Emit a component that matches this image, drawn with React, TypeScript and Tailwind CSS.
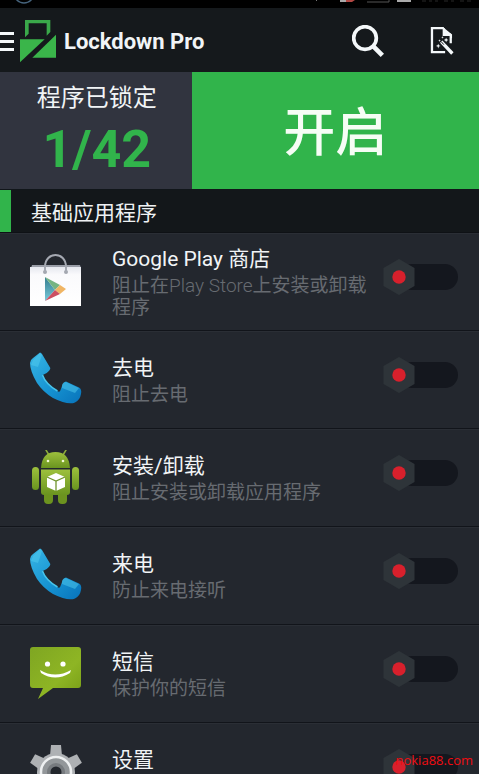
import { ReactNode, useState } from 'react';

function Logo() {
  return (
    <svg viewBox="60 54 108 132" className="h-11 w-9 shrink-0" aria-hidden="true">
      <path d="M75 109V57h76v36l-11 11V67H86v31z" fill="#3aa84a" />
      <path d="M60 115h74L60 184z" fill="#3ab54a" />
      <path d="M168 101v69H97z" fill="#3ab54a" />
    </svg>
  );
}

function SearchIcon() {
  return (
    <svg viewBox="0 0 96 96" className="h-8 w-8" fill="none" stroke="#f4f8fa" aria-hidden="true">
      <circle cx="39" cy="39" r="34" strokeWidth="11" />
      <path d="M64 64l27 27" strokeWidth="14" />
    </svg>
  );
}

function WizardIcon() {
  return (
    <svg viewBox="570 76 76 90" className="h-[30px] w-[25px]" aria-hidden="true">
      <path d="M612 82h-36v73h40M633 128v-27M612 82v20h22" fill="none" stroke="#f4f8fa" strokeWidth="7" />
      <path d="M610 79l27 22v12h-5v-9h-22z" fill="#f4f8fa" />
      <path d="M604 123l34 36" stroke="#f4f8fa" strokeWidth="10" />
      <path d="M604 123l8 9" stroke="#15191c" strokeWidth="3" />
      <path
        d="M595 129l2 5 5 2-5 2-2 6-2-6-5-2 5-2zM619 111l2 5 5 2-5 2-2 5-2-5-5-2 5-2zM608 106l1 3 3 1-3 1-1 3-1-3-3-1 3-1zM599 116l1 3 3 1-3 1-1 3-1-3-3-1 3-1z"
        fill="#f4f8fa"
      />
    </svg>
  );
}

function StoreIcon() {
  return (
    <svg viewBox="0 0 56 56" className="h-14 w-14" aria-hidden="true">
      <defs>
        <linearGradient id="bag" x1="0" y1="0" x2="0" y2="1">
          <stop offset="0" stopColor="#e6e8ef" />
          <stop offset=".2" stopColor="#fafafc" />
          <stop offset="1" stopColor="#ffffff" />
        </linearGradient>
        <linearGradient id="play" x1="0" y1="0" x2="0" y2="1">
          <stop offset="0" stopColor="#347d8e" />
          <stop offset="1" stopColor="#78c9da" />
        </linearGradient>
      </defs>
      <path d="M4 11h48l1 3H3z" fill="#9a9ea8" />
      <path d="M2 13h51v39H2z" fill="url(#bag)" />
      <circle cx="17" cy="18" r="2" fill="#a3a7af" />
      <circle cx="38" cy="18" r="2" fill="#a3a7af" />
      <path d="M17 18v-5C17-3 38-3 38 13v5" fill="none" stroke="#a5a9b2" strokeWidth="2" />
      <path d="M17 23v24l10-11z" fill="url(#play)" />
      <path d="M17 23l15 8-5 5z" fill="#75b482" />
      <path d="M32 31l6 4-6 5-5-4z" fill="#f0b564" />
      <path d="M17 47l10-11 5 4z" fill="#cc4f62" />
    </svg>
  );
}

function PhoneIcon() {
  return (
    <svg viewBox="0 0 56 56" className="h-14 w-14" aria-hidden="true">
      <defs>
        <linearGradient id="phone" x1="0" y1="0" x2="1" y2="1">
          <stop offset="0" stopColor="#38b5e4" />
          <stop offset=".55" stopColor="#1693d2" />
          <stop offset="1" stopColor="#0873ba" />
        </linearGradient>
      </defs>
      <path
        d="M12 .5Q13 .5 14 2L22.300 16Q22.500 18 18.700 21L14.700 23Q17 32 29 39Q32 41 32.500 38L34 34Q35 30 38 29.500L51 35.500Q54 37 53 42Q52 48 47 50.500Q40 53.500 25 46Q15 40 9 31Q2 19 2 11Q2 8 5 6Z"
        fill="url(#phone)"
      />
      <path d="M5 8l7-7 2 2-4 12-7-2zM34 33q1-3 4-3l13 6-4 5-13-5z" fill="#51cbed" opacity=".5" />
      <path d="M14.500 23q3 9 15 16" fill="none" stroke="#47c5ec" strokeWidth="1.500" />
    </svg>
  );
}

function AndroidIcon() {
  return (
    <svg viewBox="0 0 56 56" className="h-14 w-14" aria-hidden="true">
      <defs>
        <linearGradient id="robot" x1="0" y1="0" x2="0" y2="1">
          <stop offset="0" stopColor="#9dc03d" />
          <stop offset="1" stopColor="#6a941f" />
        </linearGradient>
      </defs>
      <path d="M18 0l3 5M38 0l-3 5" stroke="#8fae3a" strokeWidth="1.500" strokeLinecap="round" />
      <path d="M13 18Q14 2 27.500 2T42 18z" fill="url(#robot)" />
      <circle cx="20" cy="11" r="1.300" fill="#f3fad5" />
      <circle cx="35" cy="11" r="1.300" fill="#f3fad5" />
      <rect x="4" y="17" width="7" height="23" rx="3.500" fill="url(#robot)" />
      <rect x="44" y="17" width="7" height="23" rx="3.500" fill="url(#robot)" />
      <rect x="16" y="39" width="9" height="15" rx="4" fill="#6c931f" />
      <rect x="30" y="39" width="9" height="15" rx="4" fill="#6c931f" />
      <path d="M13 19.500h29V42q0 3-3 3H16q-3 0-3-3z" fill="url(#robot)" />
      <path d="M28 23l9 4v10l-9 4-9-4V27z" fill="#fff" />
      <path d="M19 27l9 4 9-4M28 31v10" fill="none" stroke="#71952d" strokeWidth="1.300" />
    </svg>
  );
}

function MessageIcon() {
  return (
    <svg viewBox="0 0 56 56" className="h-14 w-14" aria-hidden="true">
      <defs>
        <linearGradient id="sms" x1="0" y1="0" x2="1" y2="1">
          <stop offset="0" stopColor="#7fa622" />
          <stop offset=".6" stopColor="#8eb524" />
          <stop offset="1" stopColor="#769c16" />
        </linearGradient>
      </defs>
      <path d="M5 1h45q3 0 3 3v35q0 3-3 3H25L10 53l5-11H5q-3 0-3-3V4q0-3 3-3z" fill="url(#sms)" />
      <circle cx="19.500" cy="18" r="2.600" fill="#fff" />
      <circle cx="35" cy="18" r="2.600" fill="#fff" />
      <path d="M12 24Q27 33 43 24L42 27Q27 36 13 27Z" fill="#fff" />
    </svg>
  );
}

function GearIcon() {
  return (
    <svg viewBox="0 0 56 56" className="h-14 w-14" aria-hidden="true">
      <g fill="#aeb1b4">
        {[0, 60, 120, 180, 240, 300].map((angle) => (
          <path key={angle} d="M23 1h10l1 11H22z" transform={`rotate(${angle} 28 28)`} />
        ))}
        <circle cx="28" cy="28" r="19" />
      </g>
      <circle cx="28" cy="28" r="15" fill="#93979a" stroke="#eef0f1" strokeWidth="2.500" />
      <circle cx="28" cy="28" r="9" fill="#777b7f" />
      <circle cx="28" cy="28" r="5.500" fill="#23272d" />
    </svg>
  );
}

function Toggle({ label }: { label: string }) {
  const [on, setOn] = useState(false);
  return (
    <label className="mt-[26px] grid h-9 w-[75px] shrink-0 cursor-pointer items-center self-start">
      <input
        type="checkbox"
        role="switch"
        aria-label={label}
        checked={on}
        onChange={() => setOn(!on)}
        className="col-start-1 row-start-1 ml-4 h-[26px] appearance-none rounded-full bg-[#14171e]"
      />
      <svg
        viewBox="0 0 32 36"
        className={`pointer-events-none col-start-1 row-start-1 h-9 w-8 ${on ? 'justify-self-end' : 'justify-self-start'}`}
        aria-hidden="true"
      >
        <path d="M16 0l15.500 9v18L16 36 .5 27V9z" fill="#2e3439" />
        <circle cx="16" cy="18" r="6.700" fill={on ? '#31b44b' : '#d8202c'} />
      </svg>
    </label>
  );
}

type AppEntry = { title: string; detail?: ReactNode; icon: ReactNode };

const entries: AppEntry[] = [
  {
    title: 'Google Play 商店',
    detail: (
      <>
        阻止在<span className="font-light">Play Store</span>上安装或卸载程序
      </>
    ),
    icon: <StoreIcon />,
  },
  { title: '去电', detail: '阻止去电', icon: <PhoneIcon /> },
  { title: '安装/卸载', detail: '阻止安装或卸载应用程序', icon: <AndroidIcon /> },
  { title: '来电', detail: '防止来电接听', icon: <PhoneIcon /> },
  { title: '短信', detail: '保护你的短信', icon: <MessageIcon /> },
  { title: '设置', icon: <GearIcon /> },
];

function EntryRow({ title, detail, icon }: AppEntry) {
  return (
    <li className="flex h-[98px] shrink-0 items-center border-b border-[#11141a] bg-[#23272e] pr-[21px] pl-7 shadow-[inset_0_1px_0_#2a2e35]">
      <div className="w-[84px] shrink-0">{icon}</div>
      <div className="min-w-0 flex-1 pr-4 pb-0.5">
        <h3 className="text-[21px] leading-8 text-[#f1f4f6]">{title}</h3>
        <p className="-mr-2 min-h-[22px] text-[19px] leading-[22px] text-[#676b71]">{detail}</p>
      </div>
      <Toggle label={title} />
    </li>
  );
}

export default function App() {
  return (
    <div className="relative flex h-screen flex-col overflow-hidden bg-[#23272e] font-[Roboto,'Noto_Sans_CJK_SC',sans-serif]">
      <div className="flex h-2 shrink-0 bg-black">
        <svg viewBox="0 0 479 8" className="h-2 w-full" preserveAspectRatio="xMidYMin meet" aria-hidden="true">
          <circle cx="24" cy="-7" r="10" fill="none" stroke="#45637c" strokeWidth="1.500" />
          <path d="M316 0l1 1" stroke="#777" />
          <path d="M340 0h15l-3 2h-12z" fill="#b34844" />
          <path d="M340 0h6v2h-6z" fill="#aaa" />
          <path d="M367 2h22V0" fill="none" stroke="#555" />
          <path d="M397 0h14v2h-14z" fill="#aaa" />
          <path d="M422 1h4m3 0h3m3 0h3m6 0h4m3 0h3m6 0h4m3 0h4" stroke="#292929" />
        </svg>
      </div>
      <header className="flex h-16 shrink-0 items-center bg-[#15191c] pt-0.5 pr-6">
        <button type="button" aria-label="菜单" className="mr-1.5 flex w-3.5 shrink-0 flex-col gap-[5px]">
          <span className="h-[3px] bg-[#f4f8fa]" />
          <span className="h-[3px] bg-[#f4f8fa]" />
          <span className="h-[3px] bg-[#f4f8fa]" />
        </button>
        <Logo />
        <h1 className="ml-2 flex-1 pt-0.5 text-[22px] leading-8 font-bold text-[#f1f4f6]">Lockdown Pro</h1>
        <button type="button" aria-label="搜索" className="mr-[46px]">
          <SearchIcon />
        </button>
        <button type="button" aria-label="向导">
          <WizardIcon />
        </button>
      </header>
      <section className="flex h-[118px] shrink-0 border-b border-[#11161a]">
        <div className="flex w-2/5 flex-col items-center bg-[#31343f] pt-2.5 pl-0.5">
          <p className="text-2xl leading-8 text-[#f1f4f6]">程序已锁定</p>
          <p className="pt-1.5 text-[52px] leading-[60px] font-bold text-[#31b44b]">1/42</p>
        </div>
        <button
          type="button"
          className="flex-1 bg-[#31b44b] pt-1.5 text-[52px] leading-[60px] font-medium text-[#f6fdf5]"
        >
          开启
        </button>
      </section>
      <h2 className="flex h-[43px] shrink-0 items-stretch gap-5 border-b border-[#0e1115] bg-[#13171a] text-[21px] leading-[44px] text-[#eef1f3]">
        <span className="w-[11px] bg-[#31b44b]" />
        <span className="pt-px">基础应用程序</span>
      </h2>
      <ul className="flex flex-col">
        {entries.map((entry) => (
          <EntryRow key={entry.title} {...entry} />
        ))}
      </ul>
      <p className="absolute right-1.5 bottom-1 font-['Open_Sans',sans-serif] text-[13px] leading-5 text-[#f00d12]">
        nokia88.com
      </p>
    </div>
  );
}
